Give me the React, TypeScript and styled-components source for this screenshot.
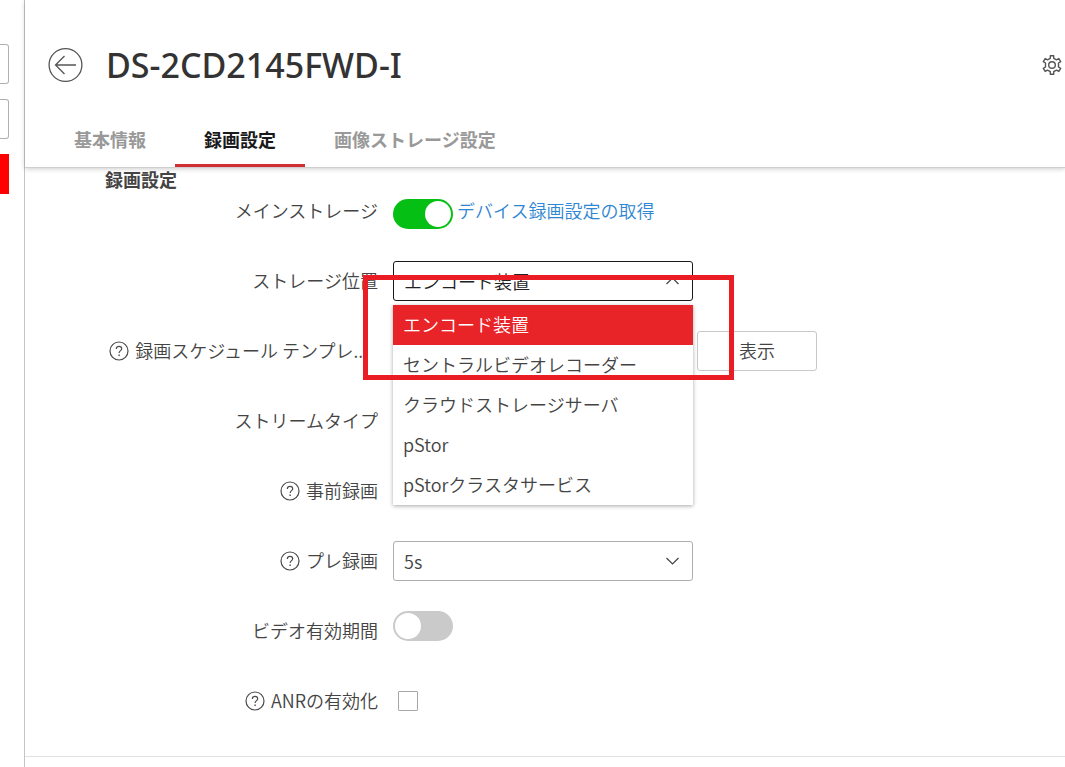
import React, { useState } from "react";
import styled, { createGlobalStyle, css } from "styled-components";

const GlobalStyle = createGlobalStyle`
  *, *::before, *::after { box-sizing: border-box; }
  body { margin: 0; background: #fff; overflow-x: hidden; }
  body, button, select, input {
    font-family: "Noto Sans CJK JP", "Open Sans", sans-serif;
    font-size: 18px;
    font-weight: 350;
    line-height: 24px;
    color: #444;
  }
`;

const Page = styled.div`
  display: flex;
  min-height: 100vh;
`;

const Sidebar = styled.aside`
  flex: none;
  width: 25px;
  padding: 44px 15px 0 0;
  border-right: 1px solid #c4c4c4;
  display: flex;
  flex-direction: column;
  gap: 15px;
`;

const SideButton = styled.button<{ $primary?: boolean }>`
  height: 40px;
  width: 100%;
  padding: 0;
  background: #fff;
  border: 1px solid #b0b0b0;
  border-left: 0;
  border-radius: 0 3px 3px 0;
  ${(p) =>
    p.$primary &&
    css`
      background: #fe0000;
      border: 0;
      border-radius: 0;
    `}
`;

const Panel = styled.main`
  flex: 1;
  min-width: 0;
  display: flex;
  flex-direction: column;
`;

const Header = styled.header`
  box-shadow: 0 1px 0 #cfcfcf, 0 2px 5px rgba(0, 0, 0, 0.2);
`;

const TitleBar = styled.div`
  display: flex;
  align-items: center;
  gap: 22px;
  height: 113px;
  padding: 16px 2px 0 23px;
`;

const IconButton = styled.button`
  display: flex;
  flex: none;
  padding: 0;
  border: 0;
  background: none;
`;

const Title = styled.h1`
  flex: 1;
  margin: 0;
  font: 500 34px/48px "Noto Sans", "Open Sans", sans-serif;
  color: #333;
`;

const Tabs = styled.nav`
  display: flex;
  padding-left: 20px;
`;

const Tab = styled.button<{ $active?: boolean }>`
  height: 54px;
  padding: 0 29px;
  border: 0;
  border-bottom: 3px solid ${(p) => (p.$active ? "#d02e33" : "transparent")};
  background: none;
  font-weight: 700;
  color: ${(p) => (p.$active ? "#1a1a1a" : "#999")};
`;

const Form = styled.form`
  padding-bottom: 35px;
`;

const SectionTitle = styled.h2`
  margin: 0 0 0 80px;
  font-size: 18px;
  line-height: 24px;
  font-weight: 700;
`;

const Row = styled.div`
  display: grid;
  grid-template-columns: 353px 1fr;
  column-gap: 15px;
  height: 40px;
  & + & { margin-top: 30px; }
`;

const LabelCell = styled.div<{ $truncated?: boolean }>`
  display: flex;
  align-items: center;
  justify-content: flex-end;
  gap: 6px;
  white-space: nowrap;
  padding-right: ${(p) => (p.$truncated ? 10 : 0)}px;
`;

const LabelText = styled.label`
  padding-bottom: 2px;
`;

const Controls = styled.div<{ $align?: string }>`
  position: relative;
  display: flex;
  align-items: ${(p) => p.$align || "center"};
  gap: 4px;
`;

const ToggleSlot = styled.span`
  display: flex;
  padding-top: 5px;
`;

const Toggle = styled.input.attrs({ type: "checkbox", role: "switch" })`
  appearance: none;
  flex: none;
  width: 60px;
  height: 30px;
  margin: 0;
  padding: 2px;
  border-radius: 15px;
  background: #cacaca;
  display: flex;
  &::before {
    content: "";
    width: 26px;
    height: 26px;
    border-radius: 50%;
    background: #fff;
  }
  &:checked {
    background: #06bf14;
    justify-content: flex-end;
  }
`;

const Checkbox = styled.input.attrs({ type: "checkbox" })`
  appearance: none;
  width: 20px;
  height: 20px;
  margin: 0 5px;
  border: 1px solid #a8a8a8;
  border-radius: 1px;
  background: #fff;
  &:checked { background: #e8232a; }
`;

const Link = styled.a`
  padding-bottom: 2px;
  color: #2f86d2;
  text-decoration: none;
`;

const SelectBox = styled.div`
  display: grid;
  align-items: center;
  width: 300px;
  & > * { grid-area: 1 / 1; }
  & > svg { justify-self: end; margin-right: 13px; pointer-events: none; }
`;

const Select = styled.select<{ $open?: boolean }>`
  appearance: none;
  width: 100%;
  height: 40px;
  padding: 0 40px 0 10px;
  border: 1px solid ${(p) => (p.$open ? "#1a1a1a" : "#adadad")};
  border-radius: 3px;
  background: #fff;
  color: ${(p) => (p.$open ? "#222" : "#444")};
`;

const Menu = styled.ul`
  position: absolute;
  z-index: 2;
  top: 44px;
  left: 0;
  width: 300px;
  margin: 0;
  padding: 0;
  list-style: none;
  background: #fff;
  box-shadow: 0 1px 4px rgba(0, 0, 0, 0.35);
`;

const Option = styled.button<{ $selected?: boolean }>`
  display: block;
  width: 100%;
  height: 40px;
  padding: 0 10px 2px;
  border: 0;
  text-align: left;
  background: ${(p) => (p.$selected ? "#e82429" : "#fff")};
  color: ${(p) => (p.$selected ? "#fff" : "#444")};
`;

const Highlight = styled.div`
  position: absolute;
  z-index: 3;
  top: 14px;
  left: -30px;
  width: 371px;
  height: 105px;
  border: 5px solid #ea1c24;
  pointer-events: none;
`;

const Button = styled.button`
  width: 120px;
  height: 40px;
  padding: 0 0 2px;
  border: 1px solid #c8c8c8;
  border-radius: 3px;
  background: #fff;
`;

const Footer = styled.footer`
  flex: 1;
  border-top: 1px solid #e2e2e2;
`;

const BackIcon = () => (
  <svg width="36" height="36" viewBox="0 0 36 36" fill="none" stroke="#555" strokeWidth="1.3">
    <circle cx="17.500" cy="18" r="16.400" />
    <path d="M28 18H7.500M16.500 9L7.500 18L16.500 27" />
  </svg>
);

const GearIcon = () => (
  <svg width="22" height="22" viewBox="0 0 22 22" fill="none" stroke="#555" strokeWidth="1.4" strokeLinejoin="round">
    <path d="M9.300 1.700h3.400v2.600l2.800 1.600 2.300-1.300 1.900 3-2.200 1.400v4l2.200 1.400-1.900 3-2.300-1.300-2.800 1.600v2.600H9.300v-2.600l-2.800-1.600-2.300 1.300-1.900-3L4.500 13V9L2.300 7.600l1.900-3 2.300 1.300 2.800-1.600z" />
    <circle cx="11" cy="11" r="3.300" />
  </svg>
);

const HelpIcon = () => (
  <svg width="20" height="20" viewBox="0 0 20 20" fill="none" stroke="#4a4a4a" strokeWidth="1.2">
    <circle cx="10" cy="10" r="9" />
    <path d="M7.300 7.900C7.300 6.300 8.400 5.300 10 5.300s2.700 1 2.700 2.400c0 1.900-2.600 2-2.600 4.300" />
    <path d="M10.100 13.600v1.500" strokeWidth="1.400" />
  </svg>
);

const Chevron = ({ up }: { up?: boolean }) => (
  <svg width="15" height="10" viewBox="0 0 15 10" fill="none" stroke="#444" strokeWidth="1.2">
    <path d={up ? "M1.500 8L7.500 2L13.500 8" : "M1.500 2L7.500 8L13.500 2"} />
  </svg>
);

type FieldProps = {
  id: string;
  label: string;
  help?: boolean;
  truncated?: boolean;
  align?: string;
  children?: React.ReactNode;
};

const Field = ({ id, label, help, truncated, align, children }: FieldProps) => (
  <Row>
    <LabelCell $truncated={truncated}>
      {help && <HelpIcon />}
      <LabelText htmlFor={id}>{label}</LabelText>
    </LabelCell>
    <Controls $align={align}>{children}</Controls>
  </Row>
);

const locations = [
  "エンコード装置",
  "セントラルビデオレコーダー",
  "クラウドストレージサーバ",
  "pStor",
  "pStorクラスタサービス",
];

export default function App() {
  const [location, setLocation] = useState(locations[0]);
  return (
    <Page lang="ja">
      <GlobalStyle />
      <Sidebar>
        <SideButton type="button" />
        <SideButton type="button" />
        <SideButton type="button" $primary />
      </Sidebar>
      <Panel>
        <Header>
          <TitleBar>
            <IconButton type="button"><BackIcon /></IconButton>
            <Title>DS-2CD2145FWD-I</Title>
            <IconButton type="button"><GearIcon /></IconButton>
          </TitleBar>
          <Tabs>
            <Tab type="button">基本情報</Tab>
            <Tab type="button" $active>録画設定</Tab>
            <Tab type="button">画像ストレージ設定</Tab>
          </Tabs>
        </Header>
        <Form>
          <SectionTitle>録画設定</SectionTitle>
          <Field id="main-storage" label="メインストレージ">
            <ToggleSlot><Toggle id="main-storage" defaultChecked /></ToggleSlot>
            <Link href="#">デバイス録画設定の取得</Link>
          </Field>
          <Field id="location" label="ストレージ位置">
            <SelectBox>
              <Select id="location" $open value={location} onChange={(e) => setLocation(e.target.value)}>
                {locations.map((name) => <option key={name}>{name}</option>)}
              </Select>
              <Chevron up />
            </SelectBox>
            <Menu>
              {locations.map((name) => (
                <li key={name}>
                  <Option type="button" $selected={name === location} onClick={() => setLocation(name)}>
                    {name}
                  </Option>
                </li>
              ))}
            </Menu>
            <Highlight />
          </Field>
          <Field id="schedule" label="録画スケジュール テンプレ..." help truncated>
            <SelectBox>
              <Select id="schedule" />
              <Chevron />
            </SelectBox>
            <Button type="button">表示</Button>
          </Field>
          <Field id="stream" label="ストリームタイプ">
            <SelectBox>
              <Select id="stream" />
              <Chevron />
            </SelectBox>
          </Field>
          <Field id="pre-record" label="事前録画" help>
            <Checkbox id="pre-record" />
          </Field>
          <Field id="pre-time" label="プレ録画" help>
            <SelectBox>
              <Select id="pre-time"><option>5s</option></Select>
              <Chevron />
            </SelectBox>
          </Field>
          <Field id="expiry" label="ビデオ有効期間" align="flex-start">
            <Toggle id="expiry" />
          </Field>
          <Field id="anr" label="ANRの有効化" help>
            <Checkbox id="anr" />
          </Field>
        </Form>
        <Footer />
      </Panel>
    </Page>
  );
}
